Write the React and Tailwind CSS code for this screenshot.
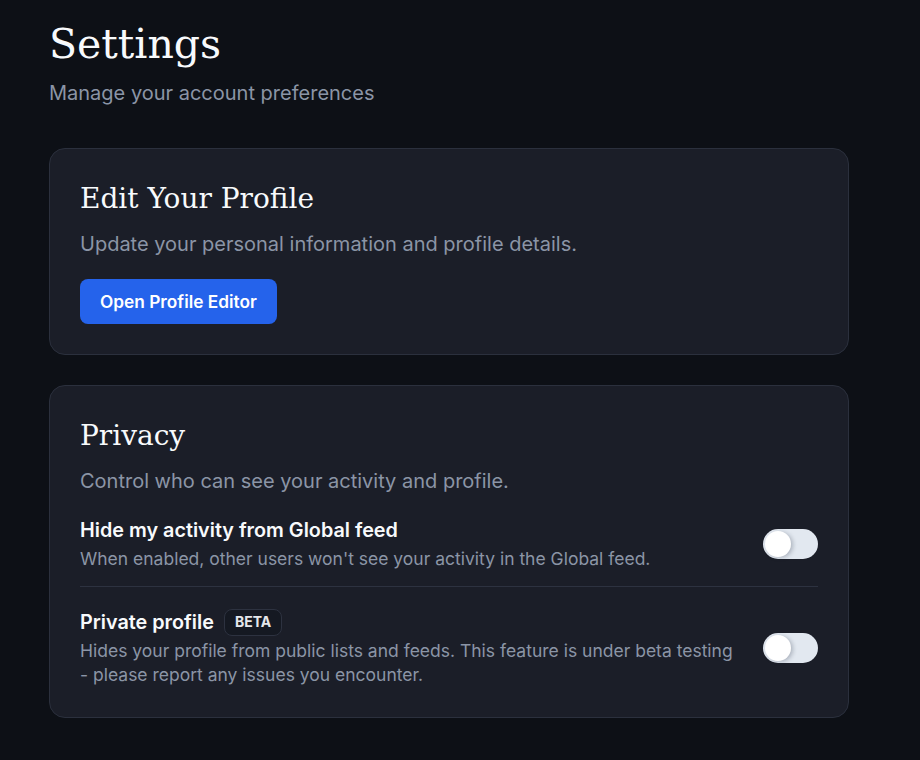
import React, { useState } from "react";

const serif = { fontFamily: '"DejaVu Serif", "Liberation Serif", serif' };

function Toggle({ on, onChange }) {
  return (
    <button
      type="button"
      role="switch"
      aria-checked={on}
      onClick={() => onChange(!on)}
      className={`relative shrink-0 w-[55px] h-[30px] rounded-full transition-colors ${
        on ? "bg-[#2563eb]" : "bg-[#e2e8f0]"
      }`}
    >
      <span
        className={`absolute top-[2px] left-[2px] w-[26px] h-[26px] rounded-full bg-white shadow-[2px_1px_4px_rgba(15,23,42,0.25)] transition-transform ${
          on ? "translate-x-[25px]" : "translate-x-0"
        }`}
      />
    </button>
  );
}

function Card({ children }) {
  return (
    <section className="rounded-2xl border border-[#2b303d] bg-[#1b1e28] p-[30px]">
      {children}
    </section>
  );
}

export default function App() {
  const [hideActivity, setHideActivity] = useState(false);
  const [privateProfile, setPrivateProfile] = useState(false);

  return (
    <div
      className="min-h-[760px] w-full bg-[#0d1016] text-white"
      style={{ fontFamily: 'Inter, "Noto Sans", sans-serif' }}
    >
      <div className="w-[849px] pl-[49px] pt-5 pb-10">
        <h1 style={serif} className="text-[41px] leading-[48px] text-[#f8fafc]">
          Settings
        </h1>
        <p className="mt-[11px] text-xl leading-7 text-[#8b95a6]">
          Manage your account preferences
        </p>

        <div className="mt-[41px] flex flex-col gap-[30px]">
          <Card>
            <h2 style={serif} className="text-[28px] leading-[40px] text-[#f8fafc]">
              Edit Your Profile
            </h2>
            <p className="mt-[11px] text-xl leading-7 text-[#8b95a6]">
              Update your personal information and profile details.
            </p>
            <button
              type="button"
              className="mt-[21px] h-[45px] rounded-lg bg-[#2563eb] px-5 text-[17.3px] font-semibold text-white"
            >
              Open Profile Editor
            </button>
          </Card>

          <Card>
            <h2 style={serif} className="text-[28px] leading-[40px] text-[#f8fafc]">
              Privacy
            </h2>
            <p className="mt-[11px] text-xl leading-7 text-[#8b95a6]">
              Control who can see your activity and profile.
            </p>

            <div className="mt-[21px] flex items-center gap-6 pb-[15px]">
              <div className="flex-1">
                <div className="text-[19.8px] leading-7 font-semibold text-[#f8fafc]">
                  Hide my activity from Global feed
                </div>
                <p className="mt-[3px] text-[17.5px] leading-6 text-[#8b95a6]">
                  When enabled, other users won't see your activity in the Global feed.
                </p>
              </div>
              <Toggle on={hideActivity} onChange={setHideActivity} />
            </div>

            <div className="flex items-center gap-6 border-t border-[#2d3240] pt-[21px]">
              <div className="flex-1">
                <div className="flex items-center gap-2.5">
                  <span className="text-[19.8px] leading-7 font-semibold text-[#f8fafc]">
                    Private profile
                  </span>
                  <span className="flex h-[27px] items-center rounded-lg border border-[#2d3240] bg-[#151922] px-2.5 text-sm font-bold text-[#e5e7eb]">
                    BETA
                  </span>
                </div>
                <p className="mt-[3px] text-[17.5px] leading-6 text-[#8b95a6]">
                  Hides your profile from public lists and feeds. This feature is under beta testing - please report any issues you encounter.
                </p>
              </div>
              <Toggle on={privateProfile} onChange={setPrivateProfile} />
            </div>
          </Card>
        </div>
      </div>
    </div>
  );
}
